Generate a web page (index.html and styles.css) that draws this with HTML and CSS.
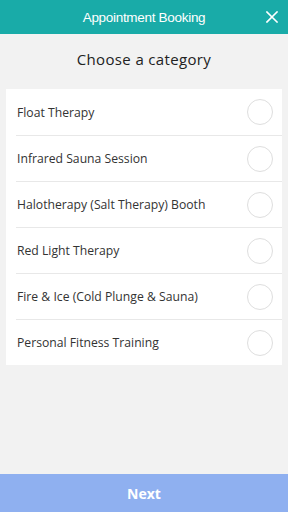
FILE: index.html
```html
<!DOCTYPE html>
<html>
<head>
<meta charset="utf-8">
<link rel="stylesheet" href="styles.css">
</head>
<body>
<div class="app">
  <header class="topbar">
    <span class="title">Appointment Booking</span>
    <span class="close" aria-label="close">
      <svg width="12" height="12" viewBox="0 0 12 12"><path d="M1 1L11 11M11 1L1 11" stroke="#fff" stroke-width="1.6" stroke-linecap="square"/></svg>
    </span>
  </header>
  <h1 class="heading">Choose a category</h1>
  <ul class="card">
    <li class="row"><span class="label">Float Therapy</span><span class="radio"></span></li>
    <li class="row"><span class="label">Infrared Sauna Session</span><span class="radio"></span></li>
    <li class="row"><span class="label">Halotherapy (Salt Therapy) Booth</span><span class="radio"></span></li>
    <li class="row"><span class="label">Red Light Therapy</span><span class="radio"></span></li>
    <li class="row"><span class="label">Fire &amp; Ice (Cold Plunge &amp; Sauna)</span><span class="radio"></span></li>
    <li class="row"><span class="label">Personal Fitness Training</span><span class="radio"></span></li>
  </ul>
  <div class="spacer"></div>
  <button class="next">Next</button>
</div>
</body>
</html>
```
FILE: styles.css
```css
html, body {
  margin: 0;
  padding: 0;
  background: #f2f2f2;
}
.app {
  width: 288px;
  height: 512px;
  display: flex;
  flex-direction: column;
  font-family: "Open Sans", "Noto Sans", sans-serif;
}
.topbar {
  height: 34px;
  flex: 0 0 34px;
  background: #19aba8;
  display: flex;
  align-items: center;
  justify-content: center;
  position: relative;
}
.title {
  font-family: "Liberation Sans", Arial, sans-serif;
  font-size: 13.5px;
  color: #fff;
  letter-spacing: -0.3px;
}
.close {
  position: absolute;
  right: 10px;
  top: 11px;
  width: 12px;
  height: 12px;
  display: flex;
}
.heading {
  margin: 0;
  height: 55px;
  line-height: 51px;
  text-align: center;
  font-weight: 400;
  font-size: 15px;
  letter-spacing: 0.35px;
  color: #222;
}
.card {
  list-style: none;
  margin: 0 6px;
  padding: 0;
  background: #fff;
}
.row {
  height: 46px;
  display: flex;
  align-items: center;
  justify-content: space-between;
  margin-left: 10px;
  padding: 0 9px 0 1px;
  border-top: 1px solid #e8e8e8;
  box-sizing: border-box;
}
.row:first-child {
  border-top: none;
}
.label {
  font-size: 12.2px;
  color: #333;
}
.radio {
  width: 24px;
  height: 24px;
  border: 1px solid #dedede;
  border-radius: 50%;
}
.spacer {
  flex: 1;
}
.next {
  flex: 0 0 38px;
  height: 38px;
  border: none;
  background: #8fb0f0;
  color: #fff;
  font-family: "Open Sans", "Noto Sans", sans-serif;
  font-weight: 700;
  font-size: 14px;
  padding: 0;
}
```
